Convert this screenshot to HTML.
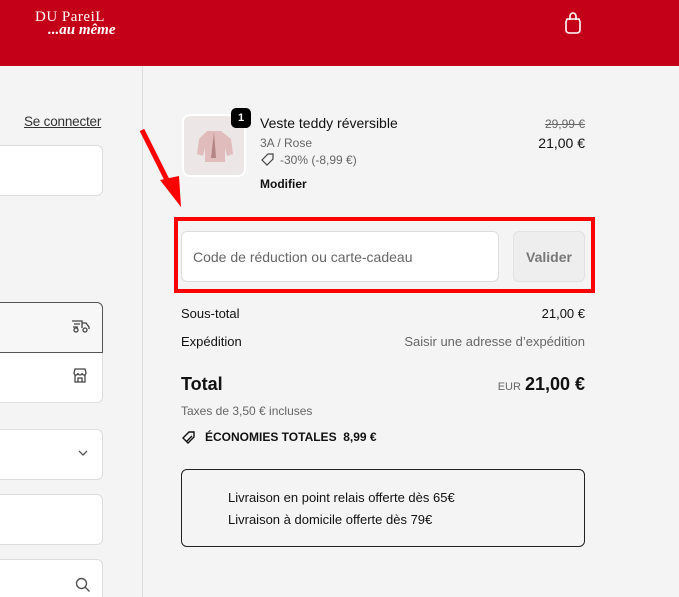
<!DOCTYPE html>
<html><head><meta charset="utf-8"><style>
*{box-sizing:border-box;margin:0;padding:0}
html,body{width:679px;height:597px;overflow:hidden}
body{background:#f4f4f4;font-family:"Liberation Sans",sans-serif;color:#111;position:relative}
.hdr{position:absolute;left:0;top:0;width:679px;height:66px;background:#c40018}
.div{position:absolute;left:142px;top:66px;width:1px;height:531px;background:#ddd}
.a{position:absolute}
.box{position:absolute;left:-10px;width:113px;background:#fff;border:1px solid #ddd;border-radius:6px}
.t{position:absolute;font-size:13px;white-space:nowrap}
</style></head><body>
<div class="hdr">
<div class="a" style="left:35px;top:9px;color:#fff;font-family:'Liberation Serif',serif;font-size:15px;letter-spacing:0.5px">DU PareiL</div>
<div class="a" style="left:48px;top:22px;color:#fff;font-family:'Liberation Serif',serif;font-style:italic;font-size:15px;font-weight:bold">...au même</div>
<svg class="a" style="left:563px;top:11px" width="20" height="24" viewBox="0 0 20 24"><path d="M7 9V5a3 3 0 0 1 6 0v4M4 8h12l1 3v8a3 3 0 0 1-3 3H6a3 3 0 0 1-3-3v-8z" fill="none" stroke="#fff" stroke-width="1.6" stroke-linejoin="round"/></svg>
</div>
<div class="div"></div>
<div class="t" style="left:24px;top:114px;font-size:13.5px;color:#333;text-decoration:underline;letter-spacing:-0.2px">Se connecter</div>
<div class="box" style="top:145px;height:51px"></div>
<div class="box" style="top:302px;height:101px;border-color:#ddd"></div>
<div class="a" style="left:-10px;top:302px;width:113px;height:51px;border:1px solid #555;border-radius:6px 6px 0 0;background:#f7f7f7"></div>
<svg class="a" style="left:71px;top:318px" width="19" height="16" viewBox="0 0 19 16"><path d="M1 3h10v7M11 5h4l3 4v2M3 6h6M2 9h5" fill="none" stroke="#444" stroke-width="1.3"/><circle cx="5" cy="12" r="2" fill="none" stroke="#444" stroke-width="1.3"/><circle cx="14" cy="12" r="2" fill="none" stroke="#444" stroke-width="1.3"/></svg>
<svg class="a" style="left:72px;top:367px" width="16" height="17" viewBox="0 0 16 17"><path d="M2 6l1-4h10l1 4a2 2 0 0 1-4 0 2 2 0 0 1-4 0 2 2 0 0 1-4 0zM3 8v7h10V8M6 15v-4h4v4" fill="none" stroke="#444" stroke-width="1.3"/></svg>
<div class="box" style="top:429px;height:51px"></div>
<svg class="a" style="left:78px;top:450px" width="10" height="7"><path d="M1 1l4 4 4-4" fill="none" stroke="#555" stroke-width="1.3"/></svg>
<div class="box" style="top:494px;height:51px"></div>
<div class="box" style="top:559px;height:60px"></div>
<svg class="a" style="left:75px;top:577px" width="16" height="16"><circle cx="6.5" cy="6.5" r="5" fill="none" stroke="#555" stroke-width="1.4"/><path d="M10 10l4.5 4.5" stroke="#555" stroke-width="1.4"/></svg>

<svg class="a" style="left:0;top:0" width="679" height="597"><path d="M142 130L170 186" stroke="#f00" stroke-width="5"/><path d="M160 180L179 176L181 207z" fill="#f00"/></svg>

<div class="a" style="left:182px;top:114px;width:64px;height:63px;border:2px solid #fff;border-radius:8px;background:#ece6e6"></div>
<svg class="a" style="left:193px;top:128px" width="42" height="36"><path d="M14 3h14l10 8 2 15-6 2-2-8v14H12V20l-2 8-6-2 2-15z" fill="#e0bcbc"/><path d="M21 4l-3 26h5z" fill="#b58585"/></svg>
<div class="a" style="left:231px;top:108px;width:20px;height:20px;border-radius:5px;background:#000;color:#fff;font-size:11px;font-weight:bold;text-align:center;line-height:20px">1</div>
<div class="t" style="left:260px;top:115px;font-size:14px">Veste teddy réversible</div>
<div class="t" style="left:260px;top:136px;font-size:12px;color:#666">3A / Rose</div>
<svg class="a" style="left:261px;top:153px" width="14" height="13"><path d="M1 7l6-6h5v5l-6 6zM9.5 3.5h.1" fill="none" stroke="#444" stroke-width="1.2"/></svg>
<div class="t" style="left:280px;top:153px;font-size:12px;color:#666">-30% (-8,99 €)</div>
<div class="t" style="left:260px;top:177px;font-size:12px;font-weight:bold">Modifier</div>
<div class="t" style="right:94px;top:117px;font-size:12px;color:#666;text-decoration:line-through">29,99 €</div>
<div class="t" style="right:94px;top:135px;font-size:14px">21,00 €</div>

<div class="a" style="left:174px;top:217px;width:421px;height:76px;border:4px solid #f00"></div>
<div class="a" style="left:181px;top:231px;width:318px;height:51px;background:#fff;border:1px solid #ddd;border-radius:6px"></div>
<div class="t" style="left:193px;top:249px;font-size:14px;color:#666">Code de réduction ou carte-cadeau</div>
<div class="a" style="left:513px;top:231px;width:72px;height:51px;background:#eee;border:1px solid #e2e2e2;border-radius:6px;color:#777;font-size:14px;font-weight:bold;text-align:center;line-height:50px">Valider</div>

<div class="t" style="left:181px;top:306px">Sous-total</div>
<div class="t" style="right:94px;top:306px">21,00 €</div>
<div class="t" style="left:181px;top:334px">Expédition</div>
<div class="t" style="right:94px;top:334px;color:#666">Saisir une adresse d’expédition</div>
<div class="t" style="left:181px;top:374px;font-size:18px;font-weight:bold">Total</div>
<div class="t" style="right:94px;top:374px;font-size:18px;font-weight:bold"><span style="font-size:11px;font-weight:normal;color:#666;margin-right:4px">EUR</span>21,00 €</div>
<div class="t" style="left:181px;top:404px;font-size:12px;color:#666">Taxes de 3,50 € incluses</div>
<svg class="a" style="left:182px;top:431px" width="16" height="13"><path d="M1 7l6-6h5v5l-6 6zM4 11l6-6M9.5 3.5h.1" fill="none" stroke="#111" stroke-width="1.4"/></svg>
<div class="t" style="left:205px;top:430px;font-size:12px;font-weight:bold">ÉCONOMIES TOTALES&nbsp; 8,99 €</div>
<div class="a" style="left:181px;top:469px;width:404px;height:78px;border:1px solid #222;border-radius:6px"></div>
<div class="t" style="left:228px;top:490px">Livraison en point relais offerte dès 65€</div>
<div class="t" style="left:228px;top:512px">Livraison à domicile offerte dès 79€</div>
</body></html>
